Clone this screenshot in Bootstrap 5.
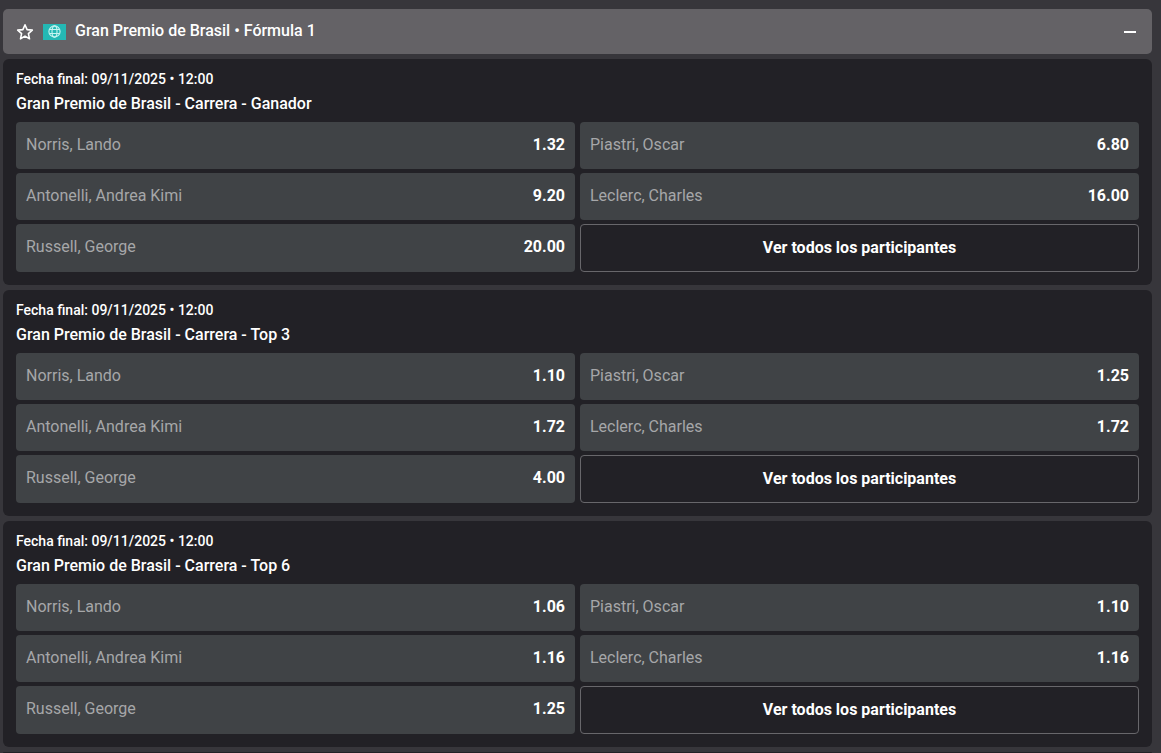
<!DOCTYPE html>
<html lang="es">
<head>
<meta charset="utf-8">
<meta name="viewport" content="width=device-width, initial-scale=1">
<title>Gran Premio de Brasil • Fórmula 1</title>
<link href="https://cdn.jsdelivr.net/npm/bootstrap@5.3.0/dist/css/bootstrap.min.css" rel="stylesheet">
<style>
  body { background: #37363b; color: #fff; font-family: Roboto, "Liberation Sans", sans-serif; font-size: 16px; line-height: 20px; }
  .page-wrap { padding: 9px 9px 0 3px; gap: 5px; }
  .event-head { background: #646266; border-radius: 5px; height: 45px; padding: 0 14px 0 13px; }
  .event-head h1 { font-size: 16px; line-height: 20px; font-weight: 500; padding-bottom: 2px; }
  .icon-btn { background: none; border: 0; padding: 0; color: #fff; display: flex; }
  .flag { background: #24b8b4; width: 23px; height: 16px; margin: 0 9px; }
  .market { background: #222126; border-radius: 6px; padding: 10px 13px 13px; }
  .market-date { font-size: 14px; font-weight: 500; line-height: 20px; }
  .market h2 { font-size: 16px; font-weight: 500; line-height: 20px; margin: 5px 0 8px; }
  .odds-grid { display: grid; grid-template-columns: 1fr 1fr; gap: 4px 5px; min-height: 150px; }
  .odd, .see-all { border-radius: 4px; color: #fff; font-size: 16px; line-height: 20px; padding: 13px 10px; }
  .odd { background: #404346; border: 0; }
  .odd-name { color: #a6a7a9; }
  .odd-value { font-weight: 700; }
  .see-all { background: transparent; border: 1px solid #68676b; font-weight: 700; padding: 12px 9px 13px; }
  .market-next { background: #222126; border-radius: 6px 6px 0 0; }
</style>
</head>
<body>
<main class="page-wrap d-flex flex-column min-vh-100">
  <header class="event-head d-flex align-items-center">
    <button class="icon-btn" type="button" aria-label="Favorito">
      <svg width="18" height="18" viewBox="0 0 18 18" fill="none" stroke="currentColor" stroke-width="1.6" stroke-linejoin="round"><path d="M9 1.8 11.1 6.6 16.3 7.1 12.4 10.6 13.5 15.8 9 13.1 4.5 15.8 5.6 10.6 1.7 7.1 6.9 6.6Z"/></svg>
    </button>
    <span class="flag d-flex align-items-center justify-content-center">
      <svg width="13" height="13" viewBox="0 0 13 13" fill="none" stroke="#c5f4f1" stroke-width="1.1"><circle cx="6.5" cy="6.5" r="5.6"/><ellipse cx="6.5" cy="6.5" rx="2.5" ry="5.6"/><path d="M1.4 4.5h10.2M1.4 8.5h10.2"/></svg>
    </span>
    <h1 class="mb-0">Gran Premio de Brasil • Fórmula 1</h1>
    <button class="icon-btn ms-auto" type="button" aria-label="Contraer">
      <svg width="16" height="16" viewBox="0 0 16 16"><path d="M2 7h12v2H2z" fill="currentColor"/></svg>
    </button>
  </header>

  <section class="market">
    <div class="market-date">Fecha final: 09/11/2025 • 12:00</div>
    <h2>Gran Premio de Brasil - Carrera - Ganador</h2>
    <div class="odds-grid">
      <button type="button" class="odd d-flex justify-content-between"><span class="odd-name">Norris, Lando</span><span class="odd-value">1.32</span></button>
      <button type="button" class="odd d-flex justify-content-between"><span class="odd-name">Piastri, Oscar</span><span class="odd-value">6.80</span></button>
      <button type="button" class="odd d-flex justify-content-between"><span class="odd-name">Antonelli, Andrea Kimi</span><span class="odd-value">9.20</span></button>
      <button type="button" class="odd d-flex justify-content-between"><span class="odd-name">Leclerc, Charles</span><span class="odd-value">16.00</span></button>
      <button type="button" class="odd d-flex justify-content-between"><span class="odd-name">Russell, George</span><span class="odd-value">20.00</span></button>
      <button type="button" class="see-all">Ver todos los participantes</button>
    </div>
  </section>

  <section class="market">
    <div class="market-date">Fecha final: 09/11/2025 • 12:00</div>
    <h2>Gran Premio de Brasil - Carrera - Top 3</h2>
    <div class="odds-grid">
      <button type="button" class="odd d-flex justify-content-between"><span class="odd-name">Norris, Lando</span><span class="odd-value">1.10</span></button>
      <button type="button" class="odd d-flex justify-content-between"><span class="odd-name">Piastri, Oscar</span><span class="odd-value">1.25</span></button>
      <button type="button" class="odd d-flex justify-content-between"><span class="odd-name">Antonelli, Andrea Kimi</span><span class="odd-value">1.72</span></button>
      <button type="button" class="odd d-flex justify-content-between"><span class="odd-name">Leclerc, Charles</span><span class="odd-value">1.72</span></button>
      <button type="button" class="odd d-flex justify-content-between"><span class="odd-name">Russell, George</span><span class="odd-value">4.00</span></button>
      <button type="button" class="see-all">Ver todos los participantes</button>
    </div>
  </section>

  <section class="market">
    <div class="market-date">Fecha final: 09/11/2025 • 12:00</div>
    <h2>Gran Premio de Brasil - Carrera - Top 6</h2>
    <div class="odds-grid">
      <button type="button" class="odd d-flex justify-content-between"><span class="odd-name">Norris, Lando</span><span class="odd-value">1.06</span></button>
      <button type="button" class="odd d-flex justify-content-between"><span class="odd-name">Piastri, Oscar</span><span class="odd-value">1.10</span></button>
      <button type="button" class="odd d-flex justify-content-between"><span class="odd-name">Antonelli, Andrea Kimi</span><span class="odd-value">1.16</span></button>
      <button type="button" class="odd d-flex justify-content-between"><span class="odd-name">Leclerc, Charles</span><span class="odd-value">1.16</span></button>
      <button type="button" class="odd d-flex justify-content-between"><span class="odd-name">Russell, George</span><span class="odd-value">1.25</span></button>
      <button type="button" class="see-all">Ver todos los participantes</button>
    </div>
  </section>

  <div class="market-next flex-grow-1"></div>
</main>
<script src="https://cdn.jsdelivr.net/npm/bootstrap@5.3.0/dist/js/bootstrap.bundle.min.js"></script>
</body>
</html>
